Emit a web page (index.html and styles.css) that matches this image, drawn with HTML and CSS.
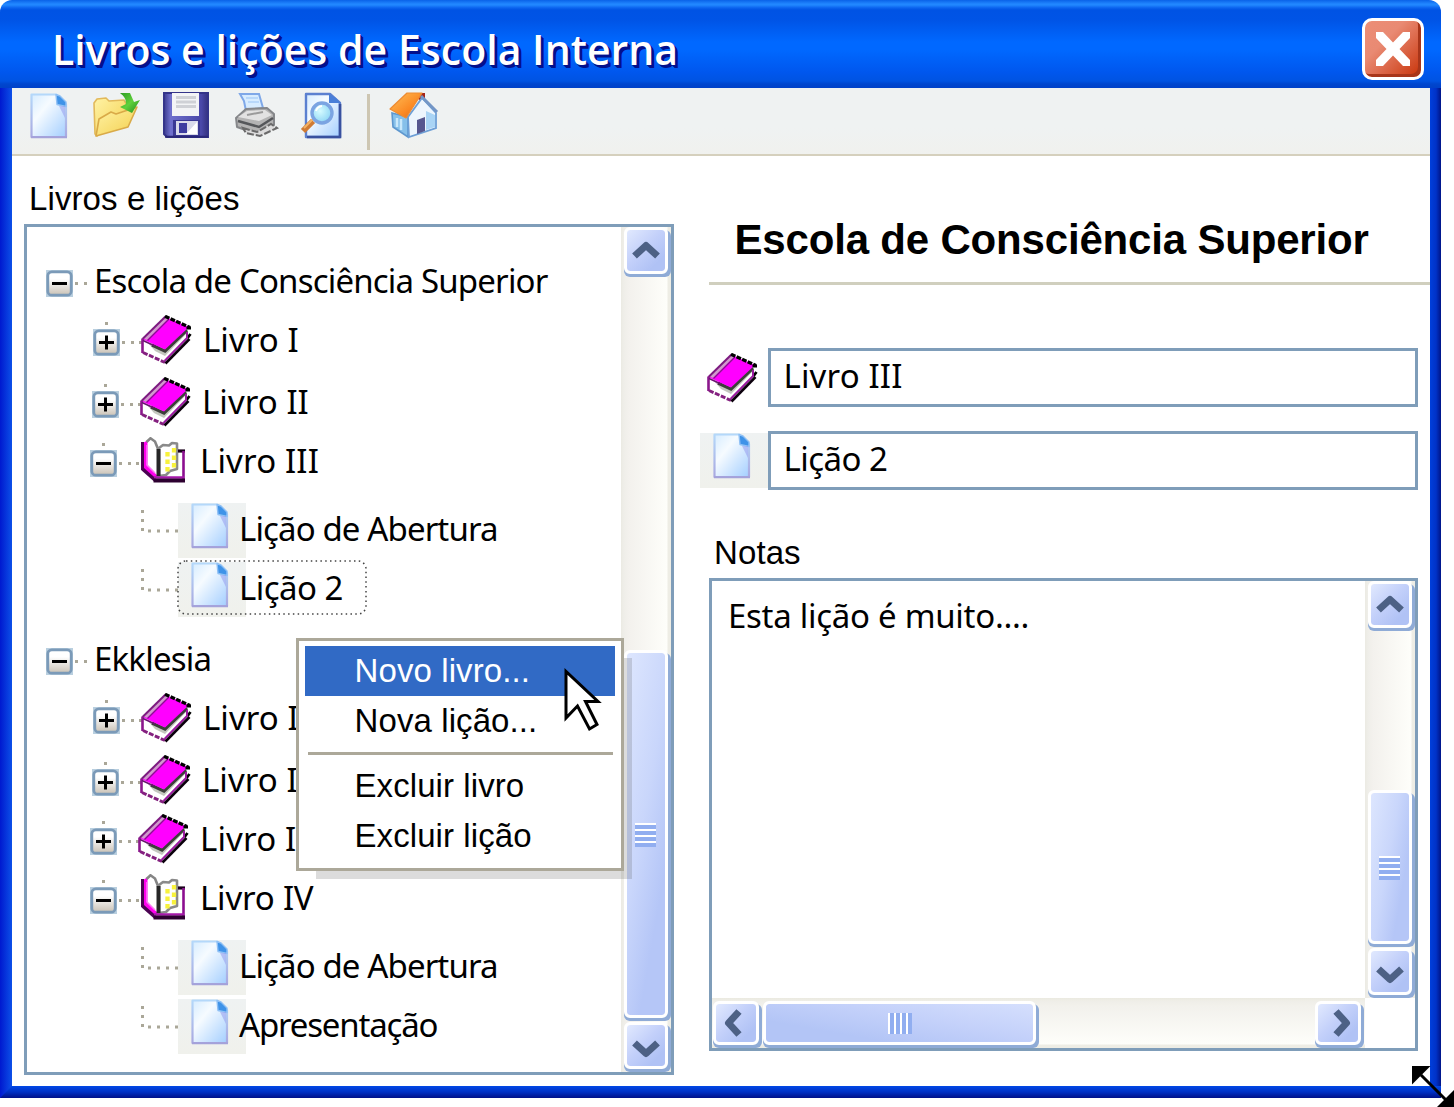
FILE: index.html
```html
<!DOCTYPE html>
<html lang="pt-BR">
<head>
<meta charset="utf-8">
<title>Livros e lições de Escola Interna</title>
<link rel="stylesheet" href="styles.css">
</head>
<body>
<svg class="defs" width="0" height="0">
  <defs>
    <linearGradient id="page" x1="0" y1="0" x2="1" y2="1"><stop offset="0" stop-color="#d6ecff"/><stop offset=".35" stop-color="#f6fbff"/><stop offset="1" stop-color="#a3ceff"/></linearGradient>
    <linearGradient id="edge" x1="0" y1="0" x2="0" y2="1"><stop offset="0" stop-color="#b4d8fa"/><stop offset="1" stop-color="#a9a8e0"/></linearGradient>
    <linearGradient id="knob" x1="0" y1="0" x2="0" y2="1"><stop offset=".3" stop-color="#fff"/><stop offset="1" stop-color="#c9c1b5"/></linearGradient>
    <linearGradient id="folder" x1="0" y1="0" x2="1" y2="1"><stop offset="0" stop-color="#fff3a6"/><stop offset="1" stop-color="#f3cf4e"/></linearGradient>
    <linearGradient id="green" x1="0" y1="0" x2="1" y2="1"><stop offset="0" stop-color="#2c9c22"/><stop offset=".5" stop-color="#5fd03c"/><stop offset="1" stop-color="#1f8a1c"/></linearGradient>
    <linearGradient id="floppy" x1="0" y1="0" x2="1" y2="0"><stop offset="0" stop-color="#3a3a8e"/><stop offset=".15" stop-color="#6f70cd"/><stop offset=".85" stop-color="#4a48a8"/><stop offset="1" stop-color="#34327f"/></linearGradient>
    <linearGradient id="roof" x1="0" y1="0" x2="1" y2="1"><stop offset="0" stop-color="#ffc05a"/><stop offset=".6" stop-color="#fb8a24"/><stop offset="1" stop-color="#d9631a"/></linearGradient>
    <radialGradient id="lens" cx=".4" cy=".4" r=".6"><stop offset="0" stop-color="#d6fbff"/><stop offset="1" stop-color="#8fd6f5"/></radialGradient>
    <symbol id="doc" viewBox="0 0 38 46">
      <path d="M1.500 1.500H26L36 11V44H1.500z" fill="url(#page)" stroke="url(#edge)" stroke-width="2.200" stroke-linejoin="round"/>
      <path d="M26 1.500L30 3L36 9V13.500L27 11.500z" fill="#3f93e8" stroke="#8fc0f5" stroke-width="1.400" stroke-linejoin="round"/>
      <path d="M29 13H35V25z" fill="#8f96ec" opacity=".5"/>
      <path d="M1 44.300H37" stroke="#a4a2da" stroke-width="2"/>
    </symbol>
    <symbol id="box" viewBox="0 0 27 27">
      <rect width="27" height="27" fill="#b9cfdf"/>
      <rect x="1.800" y="1.800" width="23.400" height="23.400" rx="4" fill="url(#knob)" stroke="#7b9ab8" stroke-width="2.800"/>
      <path d="M6 13.500H21" stroke="#000" stroke-width="3"/>
    </symbol>
    <symbol id="book" viewBox="0 0 51 50">
      <path d="M1.500 25L24 34L47 13V25L23.500 47L1.500 37z" fill="#fff"/>
      <path d="M7 28L24 36L46 15V18L24 41L14 36z" fill="#c3c7be"/>
      <path d="M11 30L24 36L46 15" fill="none" stroke="#3c3e3a" stroke-width="3.200"/>
      <path d="M2 24.500L25 2L48 12L24 34.500z" fill="#ff00ff"/>
      <path d="M2.500 23.500L24 2.500L27 4L6 25z" fill="#cf9acb"/>
      <path d="M6.500 25.500L27.500 4.500" stroke="#8a1090" stroke-width="1.300"/>
      <path d="M1.500 24L24.500 1.500" stroke="#7d1a80" stroke-width="2"/>
      <path d="M1.500 23.500V38" stroke="#8b178c" stroke-width="2.600"/>
      <path d="M2 25.500L14 31" fill="none" stroke="#6a1070" stroke-width="1.500"/>
      <path d="M24 1.200L49 12.500" stroke="#000" stroke-width="3.200" stroke-dasharray="4.800 1.300"/>
      <path d="M45.500 13H50M46.500 23L49.500 19" stroke="#000" stroke-width="2.800"/>
      <path d="M2 37.500L24 47.500" stroke="#84207f" stroke-width="3" stroke-dasharray="5 1.500"/>
      <path d="M23.500 46L46 23V17" fill="none" stroke="#9b1aa0" stroke-width="2"/>
      <path d="M24.500 48.500L48.500 24" stroke="#0b000c" stroke-width="2.600"/>
    </symbol>
    <symbol id="openbook" viewBox="0 0 44 46">
      <path d="M16 12H42V43H16z" fill="#fff"/>
      <path d="M2 6L7 3V26L17 36V41H12L2 32z" fill="#f0e"/>
      <path d="M6.500 4L10 1.500L17 12V39L6.500 29z" fill="#fff"/>
      <path d="M6 8V28L14 36" fill="none" stroke="#fa7bf5" stroke-width="1.600"/>
      <path d="M5.500 5L9.500 1.300L14 4.500L17 12" fill="none" stroke="#858585" stroke-width="2.600"/>
      <path d="M1.500 5V33" stroke="#4b0352" stroke-width="3"/>
      <path d="M1.500 32L14 43" stroke="#4b0352" stroke-width="3.600"/>
      <path d="M18 11L22 8L28 8.500L31 6L36 6.500V32L29 34L25 38L18 39z" fill="#fff" stroke="#8a8a8a" stroke-width="2.600" stroke-linejoin="round"/>
      <path d="M17.500 12V39" stroke="#262626" stroke-width="4"/>
      <path d="M26.500 15V36M33 11V31" stroke="#f8f23c" stroke-width="4.300" stroke-dasharray="4.500 3"/>
      <path d="M37 14H44" stroke="#1b001c" stroke-width="3.200"/>
      <path d="M42.500 14V43" stroke="#8c0f90" stroke-width="2.600"/>
      <path d="M13 40.500H43" stroke="#a517a9" stroke-width="2.500"/>
      <path d="M12.500 43.500H44" stroke="#2d0030" stroke-width="4"/>
    </symbol>
    <symbol id="branch" viewBox="0 0 37 29"><path d="M0 1.500H3M0 10.500H3M0 19.500H3M7 21H10M16 21H19M25 21H28M34 21H37" stroke="#aaa798" stroke-width="2.800"/></symbol>
    <symbol id="chev" viewBox="0 0 30 20"><path d="M3.500 15L15 4.500L26.500 15" fill="none" stroke="#4d6185" stroke-width="7" stroke-linejoin="round"/></symbol>
  </defs>
</svg>

<main class="window">
  <header class="titlebar">
    <h1>Livros e lições de Escola Interna</h1>
    <button class="close" aria-label="Fechar"><svg width="34" height="34" viewBox="0 0 34 34"><path d="M0 0H7L17 10.500L27 0H34V6L23.500 17L34 28V34H27L17 23.500L7 34H0V28L10.500 17L0 6z" fill="#fff"/></svg></button>
  </header>

  <div class="client">
    <nav class="toolbar">
      <svg width="38" height="46"><use href="#doc"/></svg>
      <svg class="t-open" width="50" height="46" viewBox="0 0 50 46">
        <path d="M2 10L5 6L14 5L17 8L32 7L35 12V22L12 34L5 43L3 41z" fill="url(#folder)" stroke="#e2b95a" stroke-width="1.600" stroke-linejoin="round"/>
        <path d="M4 43L7 26L19 19L24 21L45 14L36 34z" fill="url(#folder)" stroke="#d9aa48" stroke-width="1.600" stroke-linejoin="round"/>
        <path d="M28 0H38L42 9L48 7L40 20L28 14L34 11C34 6 32 3 28 0z" fill="url(#green)"/>
      </svg>
      <svg class="t-save" width="46" height="46" viewBox="0 0 46 46">
        <path d="M1 0H45V44H4L1 41z" fill="url(#floppy)" stroke="#34348a" stroke-width="2"/>
        <path d="M9 0H36V23H9z" fill="#f3f4f6"/>
        <path d="M13 4.500H33M13 9H33M13 13.500H33" stroke="#cfd1d6" stroke-width="3"/>
        <path d="M10 27H37V43H10z" fill="#3b3a95"/>
        <path d="M13 28H35V42H13z" fill="#d9dbea"/><path d="M16 30H24V40H16z" fill="#3d3da0"/><path d="M23 41L34 29V41z" fill="#fff"/>
        <path d="M2 43.800H45" stroke="#292778" stroke-width="2"/>
      </svg>
      <svg class="t-print" width="46" height="46" viewBox="0 0 46 46">
        <path d="M7 1H26L30 15L13 18L11 8z" fill="#d7ecff" stroke="#7fa8e8" stroke-width="2"/>
        <path d="M13 5L25 5M15 9L26 9" stroke="#b8d8fa" stroke-width="2"/>
        <path d="M3 25L13 16L34 15L41 21V32L27 42L4 34z" fill="#b3b3b3" stroke="#85878a" stroke-width="2" stroke-linejoin="round"/>
        <path d="M5 24L14 18L32 17L39 22L26 28z" fill="#e2e2e2"/>
        <path d="M14 22L30 19" stroke="#9b9b9b" stroke-width="2"/>
        <path d="M5 28L26 34L40 25" fill="none" stroke="#55575a" stroke-width="2.500"/>
        <path d="M10 35L24 39L38 31L44 35L27 43L13 40z" fill="#dcdcdc" stroke="#6a6a6a" stroke-width="2" stroke-dasharray="7 2"/>
      </svg>
      <svg class="t-find" width="42" height="46" viewBox="0 0 42 46">
        <path d="M6 1H30L40 10V44H6z" fill="url(#page)" stroke="#5b80d0" stroke-width="2.400" stroke-linejoin="round"/>
        <path d="M29 1V10H40L36 5z" fill="#4a7fd8"/>
        <path d="M40 11V44H7" fill="none" stroke="#39519f" stroke-width="2.600"/>
        <path d="M13 28L3 38" stroke="#d07b34" stroke-width="6"/><path d="M13 26L4 35" stroke="#f3b366" stroke-width="2"/>
        <circle cx="22" cy="20" r="10" fill="url(#lens)" stroke="#7ba4e2" stroke-width="3.400"/>
        <path d="M16 18A7 7 0 0 1 22 13" fill="none" stroke="#fff" stroke-width="2"/>
      </svg>
      <i class="divider"></i>
      <svg width="50" height="46" viewBox="0 0 50 46">
        <path d="M29 0H36V10L29 6z" fill="#a62418"/>
        <path d="M3 20L19 24V44L4 34z" fill="#86c0ea" stroke="#5e97ce" stroke-width="1.600"/>
        <path d="M8 25V34M12 26V37" stroke="#c9e8fb" stroke-width="2.500"/>
        <path d="M19 24L33 5L47 20V35L20 44z" fill="#edf5fd" stroke="#6d9fd6" stroke-width="1.800"/>
        <path d="M37 18L46 22V34L37 37z" fill="#a9d4f5"/>
        <path d="M28 27L36 24V38L28 41z" fill="#57578f"/>
        <path d="M1 16L18 0H33L17 25z" fill="url(#roof)" stroke="#ee8b32" stroke-width="1.200" stroke-linejoin="round"/>
        <path d="M32 3L48 19" stroke="#7396c6" stroke-width="3"/>
      </svg>
    </nav>

    <div class="content">
      <section class="left">
        <label class="caption c1">Livros e lições</label>
        <div class="treebox">
          <ul class="tree">
            <li class="root"><svg width="48" height="27"><use href="#box" width="27" height="27"/><path class="dots" d="M29 13.500h3M38 13.500h3"/></svg><span class="n-escola">Escola de Consciência Superior</span></li>
            <li class="book b1"><svg width="49" height="67"><use href="#box" y="20" width="27" height="27"/><path class="plus" d="M13.500 26.500v14"/><path class="dots" d="M12 14.500h3M29 33.500h3M38 33.500h3M46 33.500h3"/></svg><svg class="closed" width="51" height="50"><use href="#book"/></svg><span class="n-l1">Livro I</span></li>
            <li class="book b2"><svg width="49" height="67"><use href="#box" y="20" width="27" height="27"/><path class="plus" d="M13.500 26.500v14"/><path class="dots" d="M12 14.500h3M29 33.500h3M38 33.500h3M46 33.500h3"/></svg><svg class="closed" width="51" height="50"><use href="#book"/></svg><span class="n-l2">Livro II</span></li>
            <li class="book b3"><svg width="49" height="67"><use href="#box" y="20" width="27" height="27"/><path class="dots" d="M12 14.500h3M29 33.500h3M38 33.500h3M46 33.500h3"/></svg><svg class="open" width="44" height="46"><use href="#openbook"/></svg><span class="n-l3">Livro III</span></li>
            <li class="lesson first"><svg class="branch" width="37" height="29"><use href="#branch"/></svg><b class="tile"><svg width="38" height="46"><use href="#doc"/></svg></b><span class="n-abre">Lição de Abertura</span></li>
            <li class="lesson"><svg class="branch" width="37" height="29"><use href="#branch"/></svg><b class="tile"><svg width="38" height="46"><use href="#doc"/></svg></b><span class="n-li2">Lição 2</span><svg class="focus" width="190" height="55"><rect x="1" y="1" width="188" height="53" rx="8"/></svg></li>
            <li class="root second"><svg width="48" height="27"><use href="#box" width="27" height="27"/><path class="dots" d="M29 13.500h3M38 13.500h3"/></svg><span class="n-ekk">Ekklesia</span></li>
            <li class="book b1"><svg width="49" height="67"><use href="#box" y="20" width="27" height="27"/><path class="plus" d="M13.500 26.500v14"/><path class="dots" d="M12 14.500h3M29 33.500h3M38 33.500h3M46 33.500h3"/></svg><svg class="closed" width="51" height="50"><use href="#book"/></svg><span class="n-l1">Livro I</span></li>
            <li class="book b2"><svg width="49" height="67"><use href="#box" y="20" width="27" height="27"/><path class="plus" d="M13.500 26.500v14"/><path class="dots" d="M12 14.500h3M29 33.500h3M38 33.500h3M46 33.500h3"/></svg><svg class="closed" width="51" height="50"><use href="#book"/></svg><span class="n-l2">Livro II</span></li>
            <li class="book b3"><svg width="49" height="67"><use href="#box" y="20" width="27" height="27"/><path class="plus" d="M13.500 26.500v14"/><path class="dots" d="M12 14.500h3M29 33.500h3M38 33.500h3M46 33.500h3"/></svg><svg class="closed" width="51" height="50"><use href="#book"/></svg><span class="n-l3">Livro III</span></li>
            <li class="book b3"><svg width="49" height="67"><use href="#box" y="20" width="27" height="27"/><path class="dots" d="M12 14.500h3M29 33.500h3M38 33.500h3M46 33.500h3"/></svg><svg class="open" width="44" height="46"><use href="#openbook"/></svg><span class="n-l4">Livro IV</span></li>
            <li class="lesson first"><svg class="branch" width="37" height="29"><use href="#branch"/></svg><b class="tile"><svg width="38" height="46"><use href="#doc"/></svg></b><span class="n-abre">Lição de Abertura</span></li>
            <li class="lesson"><svg class="branch" width="37" height="29"><use href="#branch"/></svg><b class="tile"><svg width="38" height="46"><use href="#doc"/></svg></b><span class="n-apr">Apresentação</span></li>
          </ul>
          <div class="vbar">
            <div class="btn"><svg width="30" height="20"><use href="#chev"/></svg></div>
            <div class="thumb tree-thumb"><i class="grip"></i></div>
            <div class="btn down"><svg width="30" height="20"><use href="#chev"/></svg></div>
          </div>
        </div>
      </section>

      <section class="right">
        <h2>Escola de Consciência Superior</h2>
        <div class="field f1"><svg width="51" height="50"><use href="#book"/></svg><div class="input n-l3">Livro III</div></div>
        <div class="field f2"><b class="tile"><svg width="38" height="46"><use href="#doc"/></svg></b><div class="input n-li2">Lição 2</div></div>
        <label class="caption c2">Notas</label>
        <div class="notes">
          <div class="text">Esta lição é muito....</div>
          <div class="vbar">
            <div class="btn"><svg width="30" height="20"><use href="#chev"/></svg></div>
            <div class="thumb notes-thumb"><i class="grip"></i></div>
            <div class="btn down"><svg width="30" height="20"><use href="#chev"/></svg></div>
          </div>
          <div class="hbar">
            <div class="btn west"><svg width="30" height="20"><use href="#chev"/></svg></div>
            <div class="thumb h-thumb"><i class="grip"></i></div>
            <div class="btn east"><svg width="30" height="20"><use href="#chev"/></svg></div>
          </div>
        </div>
      </section>
    </div>
  </div>

  <div class="frame-bottom"></div>

  <div class="menu">
    <div class="item active m1">Novo livro...</div>
    <div class="item m2">Nova lição...</div>
    <hr>
    <div class="item m3">Excluir livro</div>
    <div class="item m4">Excluir lição</div>
  </div>
  <svg class="cursor" width="40" height="66" viewBox="0 0 40 66"><path d="M3 4.500V51L14.500 39L26.500 62L34 57.500L22.500 34.500H35z" fill="#fff" stroke="#000" stroke-width="3"/></svg>
  <svg class="resize" width="43" height="42" viewBox="0 0 43 42"><path d="M0 0H18.500L0 18.500zM42 24V42H24z"/><path d="M9 9L34 34" stroke="#000" stroke-width="3"/></svg>
</main>
</body>
</html>
```
FILE: styles.css
```css
* { box-sizing: border-box; }
html, body { margin: 0; height: 1107px; overflow: hidden; background: #fff; }
body { font: 33px "Liberation Sans", Arial, sans-serif; color: #000; }
svg { display: block; flex: none; overflow: visible; }
.defs { position: absolute; }
.window { position: relative; width: 1441px; height: 1107px; }

.titlebar {
  display: flex; align-items: center; justify-content: space-between;
  height: 88px; padding: 9px 17px 0 52px;
  border-radius: 12px 12px 0 0;
  background: linear-gradient(#0a62e8 0, #2187ff 4px, #2187ff 5px, #0a62ee 8px, #0053e4 10px, #0054e6 20px, #0068ff 42px, #0068ff 50px, #0057ee 72px, #0053e2 81px, #0046ce 84px, #0041c8 88px);
}
h1 {
  margin: 0; font: 600 41px/60px "Open Sans", sans-serif; letter-spacing: .02px;
  color: #fff; text-shadow: 1px 1px 0 #03108c, 2px 2px 0 #03108c, 3px 3px 0 #03108c;
}
.close {
  display: grid; place-items: center; width: 62px; height: 62px; padding: 0;
  border: 3px solid #fff; border-radius: 10px;
  background: linear-gradient(135deg, #ec8d76 0, #e98a73 35%, #c83208 100%);
  box-shadow: inset -3px -3px 0 #a8361a;
}

.client {
  height: 998px; border-left: 12px solid; border-right: 11px solid;
  border-image: linear-gradient(90deg, #0019cf 0, #0c50e8 12px, #fff 12px, #fff calc(100% - 11px), #003fdb calc(100% - 11px), #0032c8 calc(100% - 5px), #001487 100%) 0 11 0 12;
}
.frame-bottom { position: relative; height: 12px; background: linear-gradient(#0048e6, #0030c4 50%, #001088); }
.frame-bottom::before {
  content: ""; position: absolute; left: 0; top: 0; width: 12px; height: 12px;
  background: linear-gradient(90deg, #0019cf, #0c50e8); clip-path: polygon(0 0, 100% 0, 0 100%);
}

.toolbar {
  display: flex; align-items: flex-start; height: 68px; padding: 5px 0 0 18px;
  background: linear-gradient(#eff2f2 60%, #f0f1ee); border-bottom: 2.5px solid #d5d0bd;
}
.t-open { margin-left: 24px; }
.t-save { margin-left: 21px; }
.t-print { margin-left: 24px; }
.t-find { margin-left: 21px; }
.divider { width: 3px; height: 56px; margin: 1px 19px 0 25px; background: #cdc6b2; }

.content { display: flex; padding-left: 12px; }
.caption { display: block; height: 38px; line-height: 38px; }
.left { width: 650px; padding-top: 24px; }
.c1 { padding-left: 5px; letter-spacing: .1px; margin-bottom: 6px; }
.treebox { display: flex; height: 851px; border: 3px solid #7f9db9; }
.tree { flex: 1; margin: 0; padding: 27px 0 0; list-style: none; font-family: "Noto Sans", sans-serif; white-space: nowrap; }
.tree li { position: relative; display: flex; align-items: center; height: 59px; }
.tree span { align-self: flex-start; line-height: 53px; }
.root { padding-left: 19px; }
.second { margin-top: 13px; }
.b1 { padding-left: 66px; }
.b2 { padding-left: 65px; margin-top: 3px; }
.b3 { padding-left: 63px; }
.book span { margin-left: 10px; }
.closed { margin-top: -5px; margin-left: -1px; margin-right: 1px; }
.book .open { margin-right: 5px; margin-left: 2px; margin-top: -7px; }
.lesson { padding-left: 114px; }
.first { margin-top: 8px; }
.branch { margin-top: -13px; }
.lesson span { position: relative; margin-left: -7px; padding-top: 1px; }
.tile { width: 68px; height: 55px; flex: none; padding: 0 0 0 13px; background: linear-gradient(#eff2f2, #f0f1ec); }
.dots { fill: none; stroke: #aaa798; stroke-width: 3px; }
.plus { stroke: #000; stroke-width: 3px; }
.focus { position: absolute; left: 150px; top: 0; }
.focus rect { fill: none; stroke: #444; stroke-width: 1.500px; stroke-dasharray: 1.500 3.300; }
.n-escola { letter-spacing: -.815px; }
.n-l1 { letter-spacing: .05px; }
.n-l2 { letter-spacing: .05px; }
.n-l3 { letter-spacing: .15px; }
.n-l4 { letter-spacing: -.2px; }
.n-abre { letter-spacing: -.88px; }
.n-li2 { letter-spacing: -.55px; }
.n-ekk { letter-spacing: -.8px; }
.tree .n-apr { letter-spacing: -1.180px; }

.vbar {
  display: flex; flex-direction: column; width: 50px; padding: 0 3px 3px;
  background: linear-gradient(90deg, #ebeae3 0, #efeee9 3px, #f3f1ed 8px, #fefefa 46px, #eeede5 47px);
}
.btn, .thumb {
  display: grid; place-items: center; flex: none; width: 44px; height: 47px;
  border: 3px solid #fff; border-radius: 6px;
  background: linear-gradient(135deg, #e1e9fe 0, #c3d0fa 45%, #b0c2f5 80%) padding-box #fff;
  box-shadow: 0 3px 0 #8fabd6, 3px 3px 0 #8fabd6;
}
.down svg { transform: translateY(2px) rotate(180deg); }
.west svg { transform: translateX(-2px) rotate(-90deg); }
.east svg { transform: translateX(3px) rotate(90deg); }
.thumb { background-image: linear-gradient(100deg, #dde6fe 0, #c9d6fb 45%, #b5c6f7 75%); }
.grip { position: relative; left: -1px; }
.vbar .grip { top: 1px; width: 21px; height: 24px; background: repeating-linear-gradient(#fff 0 2.500px, #91aef0 2.500px 6px); }
.tree-thumb { height: 368px; margin: 376px 0 4px; }
.notes-thumb { height: 154px; margin: 162px 0 4px; }

.right { flex: 1; padding: 57px 0 0 35px; }
h2 {
  margin: 0; height: 72px; padding-left: 25.500px; font: bold 42px/53px "Liberation Sans", sans-serif; letter-spacing: -.18px;
  border-bottom: 3px solid #d0cfbe; white-space: nowrap;
}
.field { display: flex; align-items: center; margin-right: 12px; }
.f1 { margin-top: 63px; height: 59px; margin-left: -2px; }
.f1 svg { margin-right: 10px; }
.f2 { margin-top: 24px; height: 59px; margin-left: -9px; }
.f2 .tile { margin-top: -1px; }
.input { flex: 1; height: 59px; padding-left: 12.500px; border: 3px solid #7f9db9; font: 33px/49px "Noto Sans", sans-serif; }
.c2 { margin-top: 44px; padding-left: 5px; margin-bottom: 6px; letter-spacing: .1px; }
.notes {
  display: grid; grid-template: 417px 50px / 1fr 50px; width: 709px; height: 473px; border: 3px solid #7f9db9;
}
.text { padding: 11px 0 0 16px; font: 33px/48px "Noto Sans", sans-serif; letter-spacing: -.28px; }
.hbar {
  display: flex; padding: 3px 3px 0 1px;
  background: linear-gradient(#ebeae0 0, #efeee8 3px, #f2f1ec 8px, #fefefa 46px, #eeede5 47px);
}
.hbar .btn { height: 44px; width: 46px; }
.h-thumb { width: 273px; height: 44px; margin: 0 279px 0 4px; background-image: linear-gradient(190deg, #d5dffd 0, #c4d1fa 40%, #b3c5f6 75%); }
.hbar .grip { left: 0; width: 24px; height: 21px; background: repeating-linear-gradient(90deg, #fff 0 2.500px, #91aef0 2.500px 6px); }

.menu {
  position: absolute; z-index: 1; left: 296px; top: 638px; width: 328px; height: 233px; padding: 5px 6px;
  background: #fff; border: 3px solid #aca899; line-height: 50px;
}
.menu::after {
  content: ""; position: absolute; left: 17px; top: 17px; right: -11px; bottom: -11px;
  background: rgba(80, 80, 80, .2);
  clip-path: polygon(0 calc(100% - 8px), calc(100% - 8px) calc(100% - 8px), calc(100% - 8px) 0, 100% 0, 100% 100%, 0 100%);
}
.item { height: 50px; padding-left: 49.500px; }
.active { width: 310px; background: #316ac5; color: #fff; }
.menu hr { height: 3px; margin: 6px 2px 6px 3px; border: 0; background: #aca899; }
.m1 { letter-spacing: .1px; }
.m2 { letter-spacing: .1px; }
.m3 { letter-spacing: .08px; }
.m4 { letter-spacing: .08px; }
.cursor { position: absolute; z-index: 2; left: 563px; top: 667px; }
.resize { position: absolute; left: 1411.500px; top: 1065.500px; }
```
